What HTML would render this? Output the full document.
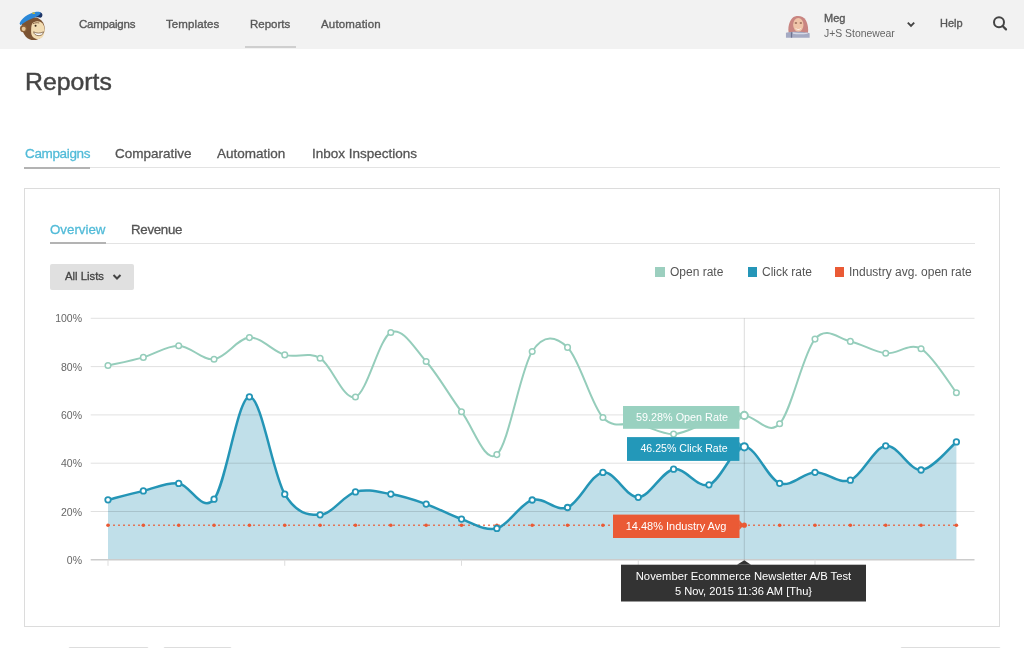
<!DOCTYPE html>
<html><head><meta charset="utf-8"><style>
html,body{margin:0;padding:0;background:#fff;width:1024px;height:648px;overflow:hidden;position:relative;font-family:"Liberation Sans",sans-serif}
.t{position:absolute;white-space:nowrap;will-change:transform}
</style></head><body>
<div style="position:absolute;left:0;top:0;width:1024px;height:48.5px;background:#f2f2f2"></div>
<div style="position:absolute;left:245.2px;top:46.2px;width:50.8px;height:2.3px;background:#cfcfcf"></div>
<div class="t" style="left:79.30px;top:18.12px;font-size:11.5px;line-height:13.8px;color:#585858;-webkit-text-stroke:0.35px #585858;letter-spacing:-0.22px;">Campaigns</div>
<div class="t" style="left:166.20px;top:18.12px;font-size:11.5px;line-height:13.8px;color:#585858;-webkit-text-stroke:0.35px #585858;letter-spacing:0.1px;">Templates</div>
<div class="t" style="left:250.20px;top:18.12px;font-size:11.5px;line-height:13.8px;color:#585858;-webkit-text-stroke:0.35px #585858;letter-spacing:0px;">Reports</div>
<div class="t" style="left:320.60px;top:18.12px;font-size:11.5px;line-height:13.8px;color:#585858;-webkit-text-stroke:0.35px #585858;letter-spacing:0.17px;">Automation</div>
<div class="t" style="left:824.00px;top:11.59px;font-size:11px;line-height:13.2px;color:#585858;-webkit-text-stroke:0.35px #585858;">Meg</div>
<div class="t" style="left:824.00px;top:27.56px;font-size:10.4px;line-height:12.48px;color:#666;">J+S Stonewear</div>
<div class="t" style="left:939.80px;top:17.49px;font-size:11px;line-height:13.2px;color:#585858;-webkit-text-stroke:0.35px #585858;">Help</div>
<div class="t" style="left:24.80px;top:67.13px;font-size:24.8px;line-height:29.76px;color:#444;-webkit-text-stroke:0.45px #444;">Reports</div>
<div style="position:absolute;left:24px;top:167px;width:976px;height:1px;background:#e3e3e3"></div>
<div style="position:absolute;left:24px;top:166.8px;width:66px;height:2px;background:#b3b3b3"></div>
<div class="t" style="left:24.60px;top:146.42px;font-size:13.5px;line-height:16.2px;color:#52bbd8;-webkit-text-stroke:0.3px #52bbd8;letter-spacing:-0.35px;">Campaigns</div>
<div class="t" style="left:115.10px;top:146.42px;font-size:13.5px;line-height:16.2px;color:#555;-webkit-text-stroke:0.3px #555;letter-spacing:0px;">Comparative</div>
<div class="t" style="left:216.70px;top:146.42px;font-size:13.5px;line-height:16.2px;color:#555;-webkit-text-stroke:0.3px #555;letter-spacing:0px;">Automation</div>
<div class="t" style="left:311.70px;top:146.42px;font-size:13.5px;line-height:16.2px;color:#555;-webkit-text-stroke:0.3px #555;letter-spacing:0px;">Inbox Inspections</div>
<div style="position:absolute;left:24px;top:188px;width:974px;height:437px;border:1px solid #dcdcdc"></div>
<div style="position:absolute;left:49.5px;top:242.5px;width:925px;height:1px;background:#e3e3e3"></div>
<div style="position:absolute;left:49.5px;top:241.8px;width:56px;height:2px;background:#b3b3b3"></div>
<div class="t" style="left:50.10px;top:221.61px;font-size:13.3px;line-height:15.96px;color:#52bbd8;-webkit-text-stroke:0.3px #52bbd8;">Overview</div>
<div class="t" style="left:131.00px;top:221.61px;font-size:13.3px;line-height:15.96px;color:#555;-webkit-text-stroke:0.3px #555;letter-spacing:-0.3px;">Revenue</div>
<div style="position:absolute;left:49.5px;top:263.5px;width:84px;height:26px;background:#e0e0e0;border-radius:2px"></div>
<div class="t" style="left:64.80px;top:270.00px;font-size:11.3px;line-height:13.56px;color:#444;-webkit-text-stroke:0.3px #444;">All Lists</div>
<svg style="position:absolute;left:112px;top:273px" width="10" height="8" viewBox="0 0 10 8"><path d="M1.5,2 L5,5.5 L8.5,2" fill="none" stroke="#444" stroke-width="2"/></svg>
<div style="position:absolute;left:655px;top:267px;width:9.5px;height:9.5px;background:#9ccfbf"></div>
<div class="t" style="left:669.90px;top:265.24px;font-size:12px;line-height:14.4px;color:#555;">Open rate</div>
<div style="position:absolute;left:747.7px;top:267px;width:9.5px;height:9.5px;background:#2596b8"></div>
<div class="t" style="left:762.00px;top:265.24px;font-size:12px;line-height:14.4px;color:#555;">Click rate</div>
<div style="position:absolute;left:834.8px;top:267px;width:9.5px;height:9.5px;background:#ea5a35"></div>
<div class="t" style="left:849.20px;top:265.24px;font-size:12px;line-height:14.4px;color:#555;">Industry avg. open rate</div>
<div class="t" style="left:41.50px;top:312.36px;font-size:10.5px;line-height:12.6px;color:#666;width:40px;text-align:right;">100%</div>
<div class="t" style="left:41.50px;top:360.66px;font-size:10.5px;line-height:12.6px;color:#666;width:40px;text-align:right;">80%</div>
<div class="t" style="left:41.50px;top:408.96px;font-size:10.5px;line-height:12.6px;color:#666;width:40px;text-align:right;">60%</div>
<div class="t" style="left:41.50px;top:457.26px;font-size:10.5px;line-height:12.6px;color:#666;width:40px;text-align:right;">40%</div>
<div class="t" style="left:41.50px;top:505.56px;font-size:10.5px;line-height:12.6px;color:#666;width:40px;text-align:right;">20%</div>
<div class="t" style="left:41.50px;top:553.86px;font-size:10.5px;line-height:12.6px;color:#666;width:40px;text-align:right;">0%</div>
<svg style="position:absolute;left:14px;top:6px" width="36" height="38" viewBox="0 0 614 648">
<ellipse cx="335" cy="385" rx="188" ry="195" fill="#7b5332"/>
<ellipse cx="290" cy="300" rx="160" ry="110" fill="#7b5332"/>
<ellipse cx="160" cy="385" rx="58" ry="62" fill="#8a6038"/>
<ellipse cx="165" cy="390" rx="34" ry="38" fill="#e6c495"/>
<path d="M310,300 C340,250 440,240 485,295 C525,345 530,430 505,500 C480,560 420,575 370,560 C320,545 290,500 292,445 C294,400 290,340 310,300 Z" fill="#f2dcb2"/>
<path d="M320,305 C350,285 400,280 430,290" fill="none" stroke="#7b5332" stroke-width="14"/>
<circle cx="368" cy="335" r="17" fill="#3a2818"/>
<path d="M335,440 C380,470 450,470 505,440 C500,490 450,510 410,505 C370,500 340,480 335,440 Z" fill="#ffffff" stroke="#6b4a2b" stroke-width="12"/>
<path d="M390,110 C430,95 480,110 485,150 C485,175 475,195 455,200 C420,195 390,190 370,190 Z" fill="#1e3566"/>
<path d="M95,300 C120,220 230,130 380,100 C420,95 445,100 455,120 C440,160 400,180 340,200 C260,230 170,280 110,330 Z" fill="#2b88d8"/>
<ellipse cx="335" cy="122" rx="26" ry="15" fill="#c4b640"/>
</svg>

<svg style="position:absolute;left:782px;top:10px" width="32" height="32" viewBox="0 0 648 648">
<path d="M140,470 C110,380 140,230 210,160 C280,100 430,110 480,200 C530,290 535,400 525,470 Z" fill="#c98581"/>
<ellipse cx="330" cy="300" rx="105" ry="140" fill="#efc4a8"/>
<ellipse cx="282" cy="265" rx="26" ry="15" fill="#8a5a48"/>
<ellipse cx="382" cy="265" rx="26" ry="15" fill="#8a5a48"/>
<path d="M265,360 C300,395 360,395 395,360 C375,410 285,410 265,360 Z" fill="#fff"/>
<path d="M80,460 C200,430 450,430 560,470 L560,560 L80,560 Z" fill="#a5aac3"/>
<path d="M220,450 C300,470 420,470 520,455 L520,480 C420,495 300,495 220,480 Z" fill="#d6d9e6"/>
<rect x="180" y="450" width="26" height="110" fill="#6e7390"/>
</svg>

<svg style="position:absolute;left:990px;top:13px" width="22" height="22" viewBox="0 0 22 22"><circle cx="9" cy="9.3" r="5" fill="none" stroke="#444" stroke-width="2"/><path d="M12.6,13 L16,16.4" stroke="#444" stroke-width="2.2" stroke-linecap="round"/></svg>
<svg style="position:absolute;left:905px;top:19px" width="12" height="10" viewBox="0 0 12 10"><path d="M2.8,3.6 L6,6.8 L9.2,3.6" fill="none" stroke="#444" stroke-width="1.9"/></svg>
<svg width="1024" height="648" viewBox="0 0 1024 648" style="position:absolute;left:0;top:0">
<path d="M108.00,499.80 C113.89,498.32 131.57,493.63 143.35,490.90 C155.13,488.17 166.92,482.02 178.70,483.40 C190.48,484.78 202.27,513.63 214.05,499.20 C225.83,484.77 237.62,397.63 249.40,396.80 C261.18,395.97 272.97,474.53 284.75,494.20 C296.53,513.87 308.32,515.18 320.10,514.80 C331.88,514.42 343.67,495.35 355.45,491.90 C367.23,488.45 379.02,492.07 390.80,494.10 C402.58,496.13 414.37,499.93 426.15,504.10 C437.93,508.27 449.72,515.05 461.50,519.10 C473.28,523.15 485.07,531.58 496.85,528.40 C508.63,525.22 520.42,503.48 532.20,500.00 C543.98,496.52 555.77,512.10 567.55,507.50 C579.33,502.90 591.12,474.10 602.90,472.40 C614.68,470.70 626.47,497.83 638.25,497.30 C650.03,496.77 661.82,471.28 673.60,469.20 C685.38,467.12 697.17,488.53 708.95,484.80 C720.73,481.07 732.52,447.05 744.30,446.80 C756.08,446.55 767.87,479.05 779.65,483.30 C791.43,487.55 803.22,472.82 815.00,472.30 C826.78,471.78 838.57,484.62 850.35,480.20 C862.13,475.78 873.92,447.50 885.70,445.80 C897.48,444.10 909.27,470.65 921.05,470.00 C932.83,469.35 950.51,446.58 956.40,441.90 L956.40,559.80 L108.00,559.80 Z" fill="#c0dfe9"/>
<line x1="90.7" y1="318.30" x2="974.5" y2="318.30" stroke="#000" stroke-opacity="0.12" stroke-width="1"/>
<line x1="90.7" y1="366.60" x2="974.5" y2="366.60" stroke="#000" stroke-opacity="0.12" stroke-width="1"/>
<line x1="90.7" y1="414.90" x2="974.5" y2="414.90" stroke="#000" stroke-opacity="0.12" stroke-width="1"/>
<line x1="90.7" y1="463.20" x2="974.5" y2="463.20" stroke="#000" stroke-opacity="0.12" stroke-width="1"/>
<line x1="90.7" y1="511.50" x2="974.5" y2="511.50" stroke="#000" stroke-opacity="0.12" stroke-width="1"/>
<line x1="90.7" y1="559.80" x2="974.5" y2="559.80" stroke="#cccccc" stroke-width="1.6"/>
<line x1="108.00" y1="559.80" x2="108.00" y2="565.80" stroke="#dddddd" stroke-width="1"/>
<line x1="284.75" y1="559.80" x2="284.75" y2="565.80" stroke="#dddddd" stroke-width="1"/>
<line x1="461.50" y1="559.80" x2="461.50" y2="565.80" stroke="#dddddd" stroke-width="1"/>
<line x1="638.25" y1="559.80" x2="638.25" y2="565.80" stroke="#dddddd" stroke-width="1"/>
<line x1="815.00" y1="559.80" x2="815.00" y2="565.80" stroke="#dddddd" stroke-width="1"/>
<line x1="744.30" y1="318.30" x2="744.30" y2="559.80" stroke="#000" stroke-opacity="0.14" stroke-width="1"/>
<line x1="108.00" y1="525.2" x2="956.40" y2="525.2" stroke="#ea5a35" stroke-opacity="0.8" stroke-width="1.5" stroke-dasharray="2 3"/>
<circle cx="108.00" cy="525.2" r="1.8" fill="#ea5a35"/>
<circle cx="143.35" cy="525.2" r="1.8" fill="#ea5a35"/>
<circle cx="178.70" cy="525.2" r="1.8" fill="#ea5a35"/>
<circle cx="214.05" cy="525.2" r="1.8" fill="#ea5a35"/>
<circle cx="249.40" cy="525.2" r="1.8" fill="#ea5a35"/>
<circle cx="284.75" cy="525.2" r="1.8" fill="#ea5a35"/>
<circle cx="320.10" cy="525.2" r="1.8" fill="#ea5a35"/>
<circle cx="355.45" cy="525.2" r="1.8" fill="#ea5a35"/>
<circle cx="390.80" cy="525.2" r="1.8" fill="#ea5a35"/>
<circle cx="426.15" cy="525.2" r="1.8" fill="#ea5a35"/>
<circle cx="461.50" cy="525.2" r="1.8" fill="#ea5a35"/>
<circle cx="496.85" cy="525.2" r="1.8" fill="#ea5a35"/>
<circle cx="532.20" cy="525.2" r="1.8" fill="#ea5a35"/>
<circle cx="567.55" cy="525.2" r="1.8" fill="#ea5a35"/>
<circle cx="602.90" cy="525.2" r="1.8" fill="#ea5a35"/>
<circle cx="638.25" cy="525.2" r="1.8" fill="#ea5a35"/>
<circle cx="673.60" cy="525.2" r="1.8" fill="#ea5a35"/>
<circle cx="708.95" cy="525.2" r="1.8" fill="#ea5a35"/>
<circle cx="744.30" cy="525.2" r="1.8" fill="#ea5a35"/>
<circle cx="779.65" cy="525.2" r="1.8" fill="#ea5a35"/>
<circle cx="815.00" cy="525.2" r="1.8" fill="#ea5a35"/>
<circle cx="850.35" cy="525.2" r="1.8" fill="#ea5a35"/>
<circle cx="885.70" cy="525.2" r="1.8" fill="#ea5a35"/>
<circle cx="921.05" cy="525.2" r="1.8" fill="#ea5a35"/>
<circle cx="956.40" cy="525.2" r="1.8" fill="#ea5a35"/>
<path d="M108.00,365.50 C113.89,364.15 131.57,360.70 143.35,357.40 C155.13,354.10 166.92,345.40 178.70,345.70 C190.48,346.00 202.27,360.55 214.05,359.20 C225.83,357.85 237.62,338.32 249.40,337.60 C261.18,336.88 272.97,351.47 284.75,354.90 C296.53,358.33 308.32,351.18 320.10,358.20 C331.88,365.22 343.67,401.28 355.45,397.00 C367.23,392.72 379.02,338.42 390.80,332.50 C402.58,326.58 414.37,348.30 426.15,361.50 C437.93,374.70 449.72,396.18 461.50,411.70 C473.28,427.22 485.07,464.63 496.85,454.60 C508.63,444.57 520.42,369.37 532.20,351.50 C543.98,333.63 555.77,336.40 567.55,347.40 C579.33,358.40 591.12,404.73 602.90,417.50 C614.68,430.27 626.47,421.23 638.25,424.00 C650.03,426.77 661.82,434.43 673.60,434.10 C685.38,433.77 697.17,425.12 708.95,422.00 C720.73,418.88 732.52,415.10 744.30,415.40 C756.08,415.70 767.87,436.52 779.65,423.80 C791.43,411.08 803.22,352.83 815.00,339.10 C826.78,325.37 838.57,339.03 850.35,341.40 C862.13,343.77 873.92,352.07 885.70,353.30 C897.48,354.53 909.27,342.23 921.05,348.80 C932.83,355.37 950.51,385.38 956.40,392.70" fill="none" stroke="#95cdbb" stroke-width="2"/>
<path d="M108.00,499.80 C113.89,498.32 131.57,493.63 143.35,490.90 C155.13,488.17 166.92,482.02 178.70,483.40 C190.48,484.78 202.27,513.63 214.05,499.20 C225.83,484.77 237.62,397.63 249.40,396.80 C261.18,395.97 272.97,474.53 284.75,494.20 C296.53,513.87 308.32,515.18 320.10,514.80 C331.88,514.42 343.67,495.35 355.45,491.90 C367.23,488.45 379.02,492.07 390.80,494.10 C402.58,496.13 414.37,499.93 426.15,504.10 C437.93,508.27 449.72,515.05 461.50,519.10 C473.28,523.15 485.07,531.58 496.85,528.40 C508.63,525.22 520.42,503.48 532.20,500.00 C543.98,496.52 555.77,512.10 567.55,507.50 C579.33,502.90 591.12,474.10 602.90,472.40 C614.68,470.70 626.47,497.83 638.25,497.30 C650.03,496.77 661.82,471.28 673.60,469.20 C685.38,467.12 697.17,488.53 708.95,484.80 C720.73,481.07 732.52,447.05 744.30,446.80 C756.08,446.55 767.87,479.05 779.65,483.30 C791.43,487.55 803.22,472.82 815.00,472.30 C826.78,471.78 838.57,484.62 850.35,480.20 C862.13,475.78 873.92,447.50 885.70,445.80 C897.48,444.10 909.27,470.65 921.05,470.00 C932.83,469.35 950.51,446.58 956.40,441.90" fill="none" stroke="#2495b6" stroke-width="2.5"/>
<circle cx="108.00" cy="365.50" r="2.8" fill="#fff" stroke="#95cdbb" stroke-width="1.5"/>
<circle cx="143.35" cy="357.40" r="2.8" fill="#fff" stroke="#95cdbb" stroke-width="1.5"/>
<circle cx="178.70" cy="345.70" r="2.8" fill="#fff" stroke="#95cdbb" stroke-width="1.5"/>
<circle cx="214.05" cy="359.20" r="2.8" fill="#fff" stroke="#95cdbb" stroke-width="1.5"/>
<circle cx="249.40" cy="337.60" r="2.8" fill="#fff" stroke="#95cdbb" stroke-width="1.5"/>
<circle cx="284.75" cy="354.90" r="2.8" fill="#fff" stroke="#95cdbb" stroke-width="1.5"/>
<circle cx="320.10" cy="358.20" r="2.8" fill="#fff" stroke="#95cdbb" stroke-width="1.5"/>
<circle cx="355.45" cy="397.00" r="2.8" fill="#fff" stroke="#95cdbb" stroke-width="1.5"/>
<circle cx="390.80" cy="332.50" r="2.8" fill="#fff" stroke="#95cdbb" stroke-width="1.5"/>
<circle cx="426.15" cy="361.50" r="2.8" fill="#fff" stroke="#95cdbb" stroke-width="1.5"/>
<circle cx="461.50" cy="411.70" r="2.8" fill="#fff" stroke="#95cdbb" stroke-width="1.5"/>
<circle cx="496.85" cy="454.60" r="2.8" fill="#fff" stroke="#95cdbb" stroke-width="1.5"/>
<circle cx="532.20" cy="351.50" r="2.8" fill="#fff" stroke="#95cdbb" stroke-width="1.5"/>
<circle cx="567.55" cy="347.40" r="2.8" fill="#fff" stroke="#95cdbb" stroke-width="1.5"/>
<circle cx="602.90" cy="417.50" r="2.8" fill="#fff" stroke="#95cdbb" stroke-width="1.5"/>
<circle cx="638.25" cy="424.00" r="2.8" fill="#fff" stroke="#95cdbb" stroke-width="1.5"/>
<circle cx="673.60" cy="434.10" r="2.8" fill="#fff" stroke="#95cdbb" stroke-width="1.5"/>
<circle cx="708.95" cy="422.00" r="2.8" fill="#fff" stroke="#95cdbb" stroke-width="1.5"/>
<circle cx="779.65" cy="423.80" r="2.8" fill="#fff" stroke="#95cdbb" stroke-width="1.5"/>
<circle cx="815.00" cy="339.10" r="2.8" fill="#fff" stroke="#95cdbb" stroke-width="1.5"/>
<circle cx="850.35" cy="341.40" r="2.8" fill="#fff" stroke="#95cdbb" stroke-width="1.5"/>
<circle cx="885.70" cy="353.30" r="2.8" fill="#fff" stroke="#95cdbb" stroke-width="1.5"/>
<circle cx="921.05" cy="348.80" r="2.8" fill="#fff" stroke="#95cdbb" stroke-width="1.5"/>
<circle cx="956.40" cy="392.70" r="2.8" fill="#fff" stroke="#95cdbb" stroke-width="1.5"/>
<circle cx="108.00" cy="499.80" r="2.75" fill="#fff" stroke="#2495b6" stroke-width="1.8"/>
<circle cx="143.35" cy="490.90" r="2.75" fill="#fff" stroke="#2495b6" stroke-width="1.8"/>
<circle cx="178.70" cy="483.40" r="2.75" fill="#fff" stroke="#2495b6" stroke-width="1.8"/>
<circle cx="214.05" cy="499.20" r="2.75" fill="#fff" stroke="#2495b6" stroke-width="1.8"/>
<circle cx="249.40" cy="396.80" r="2.75" fill="#fff" stroke="#2495b6" stroke-width="1.8"/>
<circle cx="284.75" cy="494.20" r="2.75" fill="#fff" stroke="#2495b6" stroke-width="1.8"/>
<circle cx="320.10" cy="514.80" r="2.75" fill="#fff" stroke="#2495b6" stroke-width="1.8"/>
<circle cx="355.45" cy="491.90" r="2.75" fill="#fff" stroke="#2495b6" stroke-width="1.8"/>
<circle cx="390.80" cy="494.10" r="2.75" fill="#fff" stroke="#2495b6" stroke-width="1.8"/>
<circle cx="426.15" cy="504.10" r="2.75" fill="#fff" stroke="#2495b6" stroke-width="1.8"/>
<circle cx="461.50" cy="519.10" r="2.75" fill="#fff" stroke="#2495b6" stroke-width="1.8"/>
<circle cx="496.85" cy="528.40" r="2.75" fill="#fff" stroke="#2495b6" stroke-width="1.8"/>
<circle cx="532.20" cy="500.00" r="2.75" fill="#fff" stroke="#2495b6" stroke-width="1.8"/>
<circle cx="567.55" cy="507.50" r="2.75" fill="#fff" stroke="#2495b6" stroke-width="1.8"/>
<circle cx="602.90" cy="472.40" r="2.75" fill="#fff" stroke="#2495b6" stroke-width="1.8"/>
<circle cx="638.25" cy="497.30" r="2.75" fill="#fff" stroke="#2495b6" stroke-width="1.8"/>
<circle cx="673.60" cy="469.20" r="2.75" fill="#fff" stroke="#2495b6" stroke-width="1.8"/>
<circle cx="708.95" cy="484.80" r="2.75" fill="#fff" stroke="#2495b6" stroke-width="1.8"/>
<circle cx="779.65" cy="483.30" r="2.75" fill="#fff" stroke="#2495b6" stroke-width="1.8"/>
<circle cx="815.00" cy="472.30" r="2.75" fill="#fff" stroke="#2495b6" stroke-width="1.8"/>
<circle cx="850.35" cy="480.20" r="2.75" fill="#fff" stroke="#2495b6" stroke-width="1.8"/>
<circle cx="885.70" cy="445.80" r="2.75" fill="#fff" stroke="#2495b6" stroke-width="1.8"/>
<circle cx="921.05" cy="470.00" r="2.75" fill="#fff" stroke="#2495b6" stroke-width="1.8"/>
<circle cx="956.40" cy="441.90" r="2.75" fill="#fff" stroke="#2495b6" stroke-width="1.8"/>
</svg>
<svg width="1024" height="648" viewBox="0 0 1024 648" style="position:absolute;left:0;top:0">
<rect x="623" y="406" width="116.4" height="22.8" fill="#99d1c0"/>
<path d="M739.2,412 L743.3,415.4 L739.2,421 Z" fill="#99d1c0"/>
<rect x="627" y="437.1" width="112.4" height="23.8" fill="#2398b9"/>
<path d="M739.2,442 L743.3,446.8 L739.2,452 Z" fill="#2398b9"/>
<rect x="613" y="514.6" width="126.5" height="23.4" fill="#ea5a35"/>
<path d="M739.2,520 L743.8,525.2 L739.2,530 Z" fill="#ea5a35"/>
<circle cx="744.30" cy="415.40" r="3.6" fill="#fff" stroke="#95cdbb" stroke-width="2"/>
<circle cx="744.30" cy="446.80" r="3.6" fill="#fff" stroke="#2495b6" stroke-width="2"/>
<circle cx="744.30" cy="525.2" r="2.6" fill="#ea5a35"/>
<rect x="621" y="564.7" width="245" height="36.8" fill="#333333"/>
<path d="M737,564.8 L744.3,560.2 L751,564.8 Z" fill="#333333"/>
</svg>
<div class="t" style="left:624.00px;top:410.88px;font-size:10.8px;line-height:12.96px;color:#fff;width:116px;text-align:center;">59.28% Open Rate</div>
<div class="t" style="left:627.60px;top:442.27px;font-size:10.6px;line-height:12.72px;color:#fff;width:112px;text-align:center;">46.25% Click Rate</div>
<div class="t" style="left:613.30px;top:519.59px;font-size:11px;line-height:13.2px;color:#fff;width:126px;text-align:center;">14.48% Industry Avg</div>
<div class="t" style="left:621.00px;top:570.05px;font-size:11.25px;line-height:13.5px;color:#fff;width:245px;text-align:center;">November Ecommerce Newsletter A/B Test</div>
<div class="t" style="left:621.00px;top:585.19px;font-size:11.1px;line-height:13.32px;color:#fff;width:245px;text-align:center;">5 Nov, 2015 11:36 AM [Thu}</div>
<div style="position:absolute;left:68px;top:646.5px;width:79px;height:10px;border:1px solid #ddd;border-radius:2px"></div>
<div style="position:absolute;left:163px;top:646.5px;width:67px;height:10px;border:1px solid #ddd;border-radius:2px"></div>
<div style="position:absolute;left:900px;top:646.5px;width:99px;height:10px;border:1px solid #ddd;border-radius:2px"></div>
</body></html>
